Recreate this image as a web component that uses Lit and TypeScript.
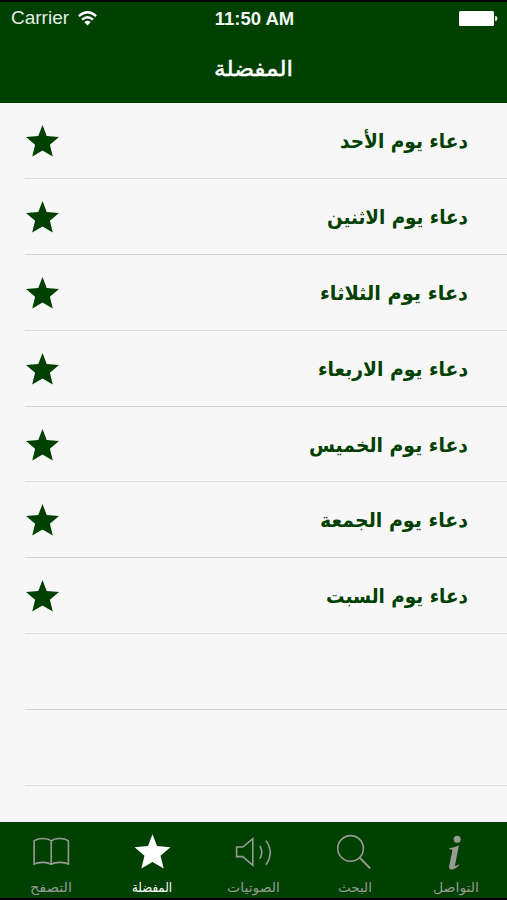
import { LitElement, html, css, svg } from "lit";
import { customElement } from "lit/decorators.js";

interface Row { label: string; width: number }
interface Tab { label: string; width: number; icon: unknown; active?: boolean }

const rows: Row[] = [
  { label: "دعاء يوم الأحد", width: 128 },
  { label: "دعاء يوم الاثنين", width: 141 },
  { label: "دعاء يوم الثلاثاء", width: 148 },
  { label: "دعاء يوم الاربعاء", width: 150 },
  { label: "دعاء يوم الخميس", width: 159 },
  { label: "دعاء يوم الجمعة", width: 148 },
  { label: "دعاء يوم السبت", width: 142 },
];

const star = "M16.5 0 20.7 10.9 33 12 23.9 19.8 26.8 31.5 16.5 25.6 6.2 31.5 9.1 19.8 0 12 12.3 10.9Z";

const bookIcon = svg`<path d="M19.2 6C15.5 2.8 6.5 2.8 2.1 5.8V29C6.5 26.8 15 26.8 19.2 29.2C23.5 26.8 32 26.8 36.4 29V5.8C32 2.8 23 2.8 19.2 6V29.2"/>`;
const starIcon = svg`<path class="solid" transform="translate(.6 -.8) scale(1.085)" d=${star}/>`;
const soundIcon = svg`<path d="M1.6 12H7.8L17.8 3.6V30.3L7.8 21.6H1.6Z M24.8 10.8Q28.8 17.3 24.8 23.6 M31 5.6Q39.4 17.3 31 29.8"/>`;
const searchIcon = svg`<circle cx="14.6" cy="13.4" r="12.8"/><path d="M23.6 22.6 34.2 33.4" stroke-width="2"/>`;
const infoIcon = svg`<circle class="solid" cx="19.2" cy="4.2" r="3.5"/><path class="solid" d="M11.3 13.2C14.6 12.7 17.4 12 20.1 10.8H20.9L17.1 29.7C16.9 31.5 18.2 31.2 20.9 29.3L21.3 30.3C17.9 33.5 15.1 34.8 12.9 34.5C11 34.3 10.8 32.5 11.3 30.2L14.3 16.1C14.6 14.5 13.8 14.2 11.1 14.2Z"/>`;

const tabs: Tab[] = [
  { label: "التصفح", width: 42, icon: bookIcon },
  { label: "المفضلة", width: 40, icon: starIcon, active: true },
  { label: "الصوتيات", width: 53, icon: soundIcon },
  { label: "البحث", width: 34, icon: searchIcon },
  { label: "التواصل", width: 46, icon: infoIcon },
];

@customElement("app-root")
export class AppRoot extends LitElement {
  static styles = css`
    :host { display: flex; flex-direction: column; box-sizing: border-box; height: 900px; width: 507px; overflow: hidden;
      background: #f7f7f7; font-family: "Liberation Sans", "DejaVu Sans", sans-serif; }
    svg { display: block; overflow: visible; }
    .ar { font-family: "DejaVu Sans", sans-serif; direction: rtl; }
    header { flex: none; box-sizing: border-box; height: 102.5px; background: #004000; color: #fff; border-top: 2px solid #000; }
    .status { display: grid; grid-template-columns: 1fr auto 1fr; align-items: center; height: 32px; padding: 0 9px 0 11px; font-size: 19px; }
    .carrier { display: flex; align-items: center; gap: 9px; color: #e4eee4; }
    .time { font-weight: 700; font-size: 18.5px; color: #f3f8f3; padding-top: 1px; }
    .battery { justify-self: end; }
    .title { display: flex; justify-content: center; padding-top: 20px; }
    .title text { font-size: 21.5px; fill: #fff; stroke: #fff; stroke-width: .5px; }
    main { flex: 1; min-height: 0; overflow: hidden; padding-top: .5px; }
    .row { box-sizing: border-box; height: 75.9px; margin-left: 25px; border-bottom: 1px solid #dedede; display: flex;
      justify-content: space-between; padding: 22px 39px 0 1px; }
    .row:nth-child(even) { border-bottom-color: #d2d2d2; }
    .row text { font-size: 20px; font-weight: 700; fill: #004000; }
    .star { fill: #004000; }
    nav { flex: none; box-sizing: border-box; height: 78.5px; background: #004000; border-bottom: 2px solid #000; display: grid;
      grid-template-columns: repeat(5, 1fr); padding-top: 13px; }
    .tab { display: flex; flex-direction: column; align-items: center; color: #969b94; }
    .tab.active { color: #fff; }
    .icon { fill: none; stroke: currentColor; stroke-width: 1.6; }
    .solid { fill: currentColor; stroke: none; }
    .tab text { font-size: 13px; fill: currentColor; }
  `;

  private label(text: string, width: number, height: number, baseline: number) {
    return html`<svg class="ar" width=${width} height=${height}>
      <text x=${width} y=${baseline} textLength=${width} lengthAdjust="spacingAndGlyphs">${text}</text></svg>`;
  }

  render() {
    return html`
      <header>
        <div class="status">
          <div class="carrier"><span>Carrier</span>
            <svg width="19" height="15" viewBox="0 0 19 15" fill="none" stroke="#fff" stroke-width="2.3">
              <path d="M.9 5.1Q9.5-2.6 18.1 5.1M4 8.7Q9.5 3.9 15 8.7"/><path d="M6.3 11.1Q9.5 8.5 12.7 11.1L9.5 14.6Z" fill="#fff" stroke="none"/>
            </svg></div>
          <div class="time">11:50 AM</div>
          <svg class="battery" width="39" height="15" viewBox="0 0 39 15" fill="#fff"><rect width="35" height="15" rx="1.5"/><path d="M36.2 4.7Q38.5 5.2 38.5 7.5T36.2 10.3Z"/></svg>
        </div>
        <div class="title">${this.label("المفضلة", 79, 30, 22)}</div>
      </header>
      <main>
        ${rows.map((r) => html`<div class="row">
          <svg class="star" width="33" height="32"><path d=${star}/></svg>
          ${this.label(r.label, r.width, 34, 23)}</div>`)}
        <div class="row"></div><div class="row"></div>
      </main>
      <nav>
        ${tabs.map((t) => html`<div class="tab ${t.active ? "active" : ""}">
          <svg class="icon" width="37" height="37" viewBox="0 0 37 37">${t.icon}</svg>
          ${this.label(t.label, t.width, 24, 20)}</div>`)}
      </nav>`;
  }
}
